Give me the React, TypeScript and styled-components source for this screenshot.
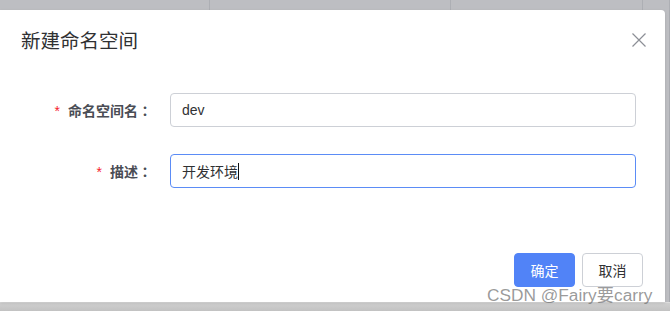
import React from "react";
import styled, { createGlobalStyle } from "styled-components";

const GlobalStyle = createGlobalStyle`
  html, body {
    margin: 0;
    padding: 0;
    background: #bdbec2;
  }
  body {
    font-family: "Liberation Sans", "Noto Sans CJK SC", sans-serif;
  }
`;

const fields = [
  { label: "命名空间名", value: "dev", focused: false },
  { label: "描述", value: "开发环境", focused: true },
];

const tableColumns = [210, 241, 192, 27];

const App = () => {
  return (
    <Screen>
      <GlobalStyle />
      <TableStrip>
        {tableColumns.map((w, i) => (
          <TableCell key={i} style={{ width: w }} />
        ))}
      </TableStrip>
      <Middle>
        <Dialog>
          <Header>
            <Title>新建命名空间</Title>
            <CloseButton aria-label="close">
              <svg width="14" height="14" viewBox="0 0 14 14">
                <path
                  d="M0.5 0.5 L13.5 13.5 M13.5 0.5 L0.5 13.5"
                  stroke="#8c8f96"
                  strokeWidth="1.2"
                  fill="none"
                />
              </svg>
            </CloseButton>
          </Header>
          <Form>
            {fields.map((f) => (
              <Row key={f.label}>
                <Label>
                  <Star>*</Star>
                  {f.label}
                  <Colon>：</Colon>
                </Label>
                <Field focused={f.focused}>
                  {f.value}
                  {f.focused ? <Caret /> : null}
                </Field>
              </Row>
            ))}
          </Form>
          <Footer>
            <Button primary>确定</Button>
            <Button>取消</Button>
          </Footer>
          <Watermark>CSDN @Fairy要carry</Watermark>
        </Dialog>
        <SideStrip />
      </Middle>
      <BottomStrip />
    </Screen>
  );
};

const Screen = styled.div`
  width: 670px;
  height: 311px;
  overflow: hidden;
  display: flex;
  flex-direction: column;
  background: #bdbec2;
`;

const TableStrip = styled.div`
  height: 10px;
  display: flex;
  flex-direction: row;
`;

const TableCell = styled.div`
  height: 10px;
  box-sizing: border-box;
  border-right: 1px solid #adafb4;
  flex-shrink: 0;
`;

const Middle = styled.div`
  display: flex;
  flex-direction: row;
  height: 292px;
`;

const Dialog = styled.div`
  position: relative;
  width: 665px;
  height: 292px;
  background: #ffffff;
  border-radius: 0 4px 0 0;
  display: flex;
  flex-direction: column;
  box-shadow: 0 1px 3px rgba(0, 0, 0, 0.12);
`;

const SideStrip = styled.div`
  width: 5px;
  box-sizing: border-box;
  border-right: 1px solid #a9abb0;
  background: #bdbec2;
`;

const Header = styled.div`
  display: flex;
  flex-direction: row;
  align-items: center;
  justify-content: space-between;
  padding: 19px 19px 0 21px;
  height: 24px;
`;

const Title = styled.div`
  font-size: 19.5px;
  line-height: 24px;
  color: #303133;
`;

const CloseButton = styled.div`
  width: 14px;
  height: 14px;
  display: flex;
  margin-top: -2px;
`;

const Form = styled.div`
  display: flex;
  flex-direction: column;
  gap: 27px;
  padding: 40px 29px 0 0;
`;

const Row = styled.div`
  display: flex;
  flex-direction: row;
  align-items: center;
`;

const Label = styled.div`
  width: 170px;
  box-sizing: border-box;
  text-align: right;
  font-size: 14px;
  font-weight: 700;
  color: #4a4d55;
  padding-right: 18px;
`;

const Star = styled.span`
  color: #f5222d;
  margin-right: 8px;
  font-weight: 400;
`;

const Colon = styled.span`
  font-family: "Noto Sans CJK JP", sans-serif;
`;

const Field = styled.div<{ focused: boolean }>`
  flex: 1;
  height: 34px;
  box-sizing: border-box;
  border: 1px solid ${({ focused }) => (focused ? "#5b8cf6" : "#cdd0d6")};
  border-radius: 4px;
  padding: 0 11px;
  display: flex;
  align-items: center;
  font-size: 14px;
  color: #303133;
`;

const Caret = styled.span`
  width: 1px;
  height: 17px;
  background: #111111;
`;

const Footer = styled.div`
  margin-top: auto;
  display: flex;
  flex-direction: row;
  justify-content: flex-end;
  gap: 7px;
  padding: 0 22px 15px 0;
`;

const Button = styled.div<{ primary?: boolean }>`
  width: 61px;
  height: 34px;
  box-sizing: border-box;
  border-radius: 4px;
  display: flex;
  align-items: center;
  justify-content: center;
  font-size: 14px;
  background: ${({ primary }) => (primary ? "#5183f7" : "#ffffff")};
  color: ${({ primary }) => (primary ? "#ffffff" : "#303133")};
  border: 1px solid ${({ primary }) => (primary ? "#5183f7" : "#cdd0d6")};
`;

const Watermark = styled.div`
  position: absolute;
  left: 487px;
  top: 275px;
  font-size: 17.3px;
  line-height: 20px;
  color: rgba(110, 110, 110, 0.7);
  white-space: nowrap;
`;

const BottomStrip = styled.div`
  flex: 1;
  border-top: 1px solid #dcdcdc;
  background: linear-gradient(#cfcfcf, #c2c2c2);
`;

export default App;
